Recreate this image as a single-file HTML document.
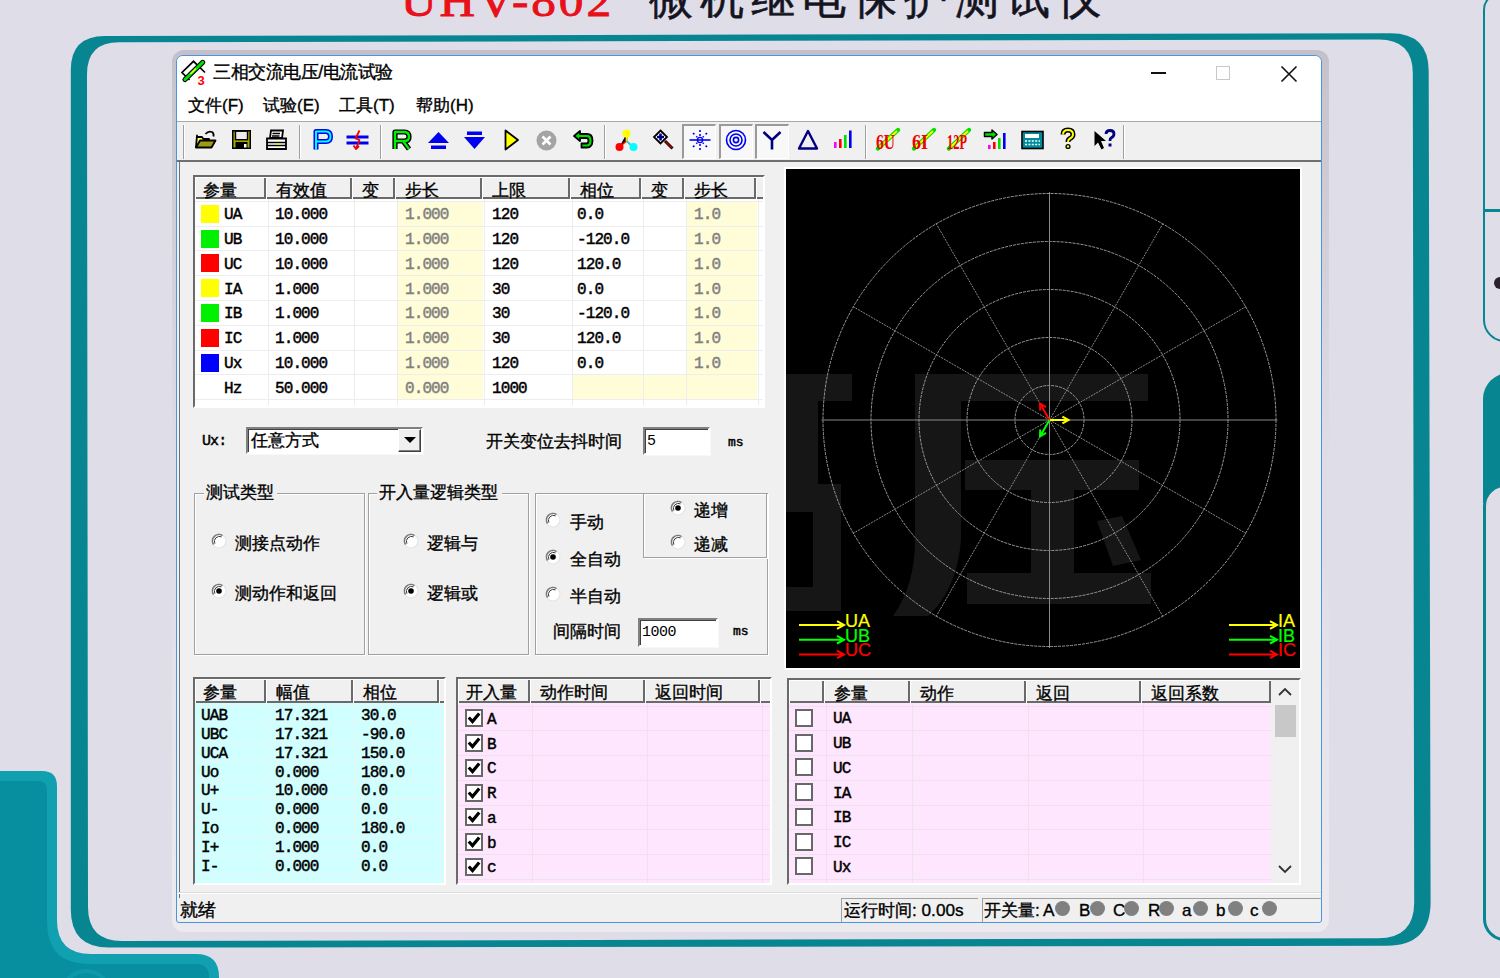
<!DOCTYPE html>
<html><head><meta charset="utf-8">
<style>
*{box-sizing:border-box;margin:0;padding:0}
html,body{width:1500px;height:978px;overflow:hidden}
body{position:relative;background:#dfdde8;font-family:"Liberation Sans",sans-serif;color:#000}
.a{position:absolute}
.t{position:absolute;white-space:nowrap;line-height:1}
.m{position:absolute;white-space:nowrap;line-height:1;font-family:"Liberation Mono",monospace;letter-spacing:-0.9px;-webkit-text-stroke:0.45px currentColor}
.t{-webkit-text-stroke:0.35px currentColor}
svg{position:absolute;overflow:visible}
</style></head><body>

<div class="t" style="left:401px;top:-20px;font-size:44px;color:#e8101a;font-family:'Liberation Serif',serif;letter-spacing:2.6px;-webkit-text-stroke:0.9px #e8101a;transform:scaleX(1.12);transform-origin:left">UHV-802</div>
<div class="t" style="left:649px;top:-24px;font-size:44px;color:#141420;letter-spacing:7px;-webkit-text-stroke:0.6px #141420">微机继电保护测试仪</div>
<svg style="left:0;top:0" width="1500" height="978"><path d="M104.8 36 L1390.7 33.3 Q1428.7 33.3 1428.7 71.3 L1430.6 901.8 Q1430.6 945.8 1386.6 945.8 L108.8 947.6 Q70.8 947.6 70.8 909.6 L70.8 70 Q70.8 36 104.8 36 Z M119 42.3 L1378.8 39.5 Q1412.8 39.5 1412.8 73.5 L1414.2 902.3 Q1414.2 938.3 1378.2 938.3 L122 941 Q88 941 88 907 L87 74.3 Q87 42.3 119 42.3 Z" fill="#078591" fill-rule="evenodd"/></svg>
<div class="a" style="left:1483px;top:-8px;width:40px;height:350px;border:2.6px solid #078591;border-radius:18px 0 0 22px"></div>
<div class="a" style="left:1483px;top:209px;width:40px;height:3px;background:#078591;"></div>
<div class="a" style="left:1483px;top:373px;width:40px;height:130px;background:#078591;border-radius:26px 0 0 0"></div>
<div class="a" style="left:1483px;top:484px;width:40px;height:457px;border:3px solid #078591;border-radius:22px 0 0 22px;background:#dfdde8"></div>
<div class="a" style="left:1494px;top:277px;width:12px;height:12px;border-radius:50%;background:#2a2030"></div>
<svg style="left:0;top:0" width="1500" height="978">
<path d="M-10 771 H42 Q57 771 57 786 V920 Q57 954 91 954 H196 Q219 954 219 977 V990 H-10 Z" fill="#10a0b0"/>
<path d="M-10 781 H38 Q47 781 47 790 V922 Q47 964 89 964 H196 Q209 964 209 977 V990 H-10 Z" fill="#078e9f"/>
<ellipse cx="86" cy="991" rx="24" ry="22" fill="#0c9aab"/>
<ellipse cx="86" cy="993" rx="21" ry="20" fill="#078e9f"/>
</svg>
<div class="a" style="left:172px;top:49.5px;width:1157px;height:420px;background:linear-gradient(#c3c0c9, #c8c5ce 40px, rgba(210,208,215,0) 420px);border-radius:12px 12px 0 0"></div>
<div class="a" style="left:172px;top:560px;width:1157px;height:372px;background:linear-gradient(rgba(236,235,240,0), #eceaef 340px);border-radius:0 0 12px 12px"></div>
<div class="a" style="left:176px;top:55px;width:1146px;height:868px;background:#f0f0f0;border:1px solid #4a94e0;border-radius:7px 7px 3px 3px"></div>
<div class="a" style="left:177px;top:56px;width:1144px;height:65px;background:#fff;border-radius:6px 6px 0 0"></div>
<div class="a" style="left:177px;top:121px;width:1144px;height:1px;background:#a9a9a9;"></div>
<div class="t" style="left:213px;top:64.3px;font-size:17.6px;color:#000;letter-spacing:-0.45px">三相交流电压/电流试验</div>
<svg style="left:180px;top:59px" width="28" height="28">
<path d="M9.5 21 L2 13.5 L13.5 2.3 L25 13.5" fill="none" stroke="#000" stroke-width="1.7"/>
<path d="M5 20.5 L22.7 3.4" stroke="#000" stroke-width="5.2" stroke-linecap="round"/>
<path d="M5 20.5 L22.7 3.4" stroke="#00e000" stroke-width="3" stroke-linecap="round"/>
<path d="M10.5 15 L16 9.5" stroke="#f0ff30" stroke-width="1.6"/>
<rect x="17.2" y="15" width="8" height="11" fill="#fff"/>
<text x="17.5" y="25.5" font-family="Liberation Sans" font-weight="bold" font-size="13" fill="#ff0000" transform="scale(1,1)">3</text>
</svg>
<div class="a" style="left:1151px;top:72px;width:15px;height:2px;background:#111;"></div>
<div class="a" style="left:1216px;top:66px;width:14px;height:14px;border:1px solid #c8c8c8"></div>
<svg style="left:1279px;top:64px" width="20" height="20"><path d="M2.5 2.5L17.5 17.5M17.5 2.5L2.5 17.5" stroke="#111" stroke-width="1.6"/></svg>
<div class="t" style="left:188px;top:97px;font-size:17px;color:#000;">文件(F)</div>
<div class="t" style="left:263px;top:97px;font-size:17px;color:#000;">试验(E)</div>
<div class="t" style="left:339px;top:97px;font-size:17px;color:#000;">工具(T)</div>
<div class="t" style="left:416px;top:97px;font-size:17px;color:#000;">帮助(H)</div>
<div class="a" style="left:183px;top:125px;width:2px;height:34px;border-left:1px solid #a0a0a0;border-right:1px solid #fff"></div>
<div class="a" style="left:177px;top:160px;width:1144px;height:2px;background:#707070;"></div>
<div class="a" style="left:179px;top:160px;width:1px;height:738px;background:#707070;"></div>
<div class="a" style="left:299px;top:125px;width:2px;height:34px;border-left:1px solid #a0a0a0;border-right:1px solid #fff"></div>
<div class="a" style="left:380px;top:125px;width:2px;height:34px;border-left:1px solid #a0a0a0;border-right:1px solid #fff"></div>
<div class="a" style="left:604px;top:125px;width:2px;height:34px;border-left:1px solid #a0a0a0;border-right:1px solid #fff"></div>
<div class="a" style="left:865px;top:125px;width:2px;height:34px;border-left:1px solid #a0a0a0;border-right:1px solid #fff"></div>
<div class="a" style="left:1123px;top:125px;width:2px;height:34px;border-left:1px solid #a0a0a0;border-right:1px solid #fff"></div>
<div class="a" style="left:682px;top:124px;width:34px;height:35px;background:#f8f8f8;border-left:2px solid #9a9a9a;border-top:2px solid #9a9a9a;border-right:1px solid #fff;border-bottom:1px solid #fff"></div>
<div class="a" style="left:719px;top:124px;width:34px;height:35px;background:#f8f8f8;border-left:2px solid #9a9a9a;border-top:2px solid #9a9a9a;border-right:1px solid #fff;border-bottom:1px solid #fff"></div>
<div class="a" style="left:755px;top:124px;width:34px;height:35px;background:#f8f8f8;border-left:2px solid #9a9a9a;border-top:2px solid #9a9a9a;border-right:1px solid #fff;border-bottom:1px solid #fff"></div>
<svg style="left:194px;top:129px" width="23" height="21" viewBox="0 0 23 21"><path d="M3 6.5 L2 18 L15 18 L15 10 L9.5 10 L8 8 L3 8Z" fill="#ffff70" stroke="#000" stroke-width="1.8" stroke-linejoin="round"/>
<path d="M2 18.5 L6 11.5 L21.5 11.5 L17.5 18.5Z" fill="#9c9c10" stroke="#000" stroke-width="1.8" stroke-linejoin="round"/>
<path d="M11.5 5 Q14.5 1.5 18 3 Q20 4 19.5 7.5" fill="none" stroke="#000" stroke-width="1.8"/></svg>
<svg style="left:231px;top:129px" width="21" height="21" viewBox="0 0 21 21"><rect x="1" y="1" width="19" height="19" fill="#000"/>
<rect x="2.5" y="2.5" width="16" height="16" fill="#a8a800"/>
<rect x="4.5" y="2.2" width="12" height="8.5" fill="#ececec" stroke="#000" stroke-width="1.4"/>
<rect x="4.5" y="13" width="12" height="7" fill="#000"/>
<rect x="13" y="15" width="2.5" height="3.5" fill="#fff"/></svg>
<svg style="left:265px;top:129px" width="23" height="22" viewBox="0 0 23 22"><path d="M6 1.5 H18 L17 9 H5Z" fill="#fff" stroke="#000" stroke-width="1.8"/>
<path d="M7.5 4.5H15M7 7H14.5" stroke="#000" stroke-width="1.3"/>
<path d="M2 9.5 H21 V20 H2Z" fill="#fff" stroke="#000" stroke-width="1.8"/>
<path d="M2 13.5H21M2 16.5H21" stroke="#000" stroke-width="1.4"/>
<rect x="11" y="14.2" width="4" height="1.8" fill="#e0e000"/></svg>
<svg style="left:312px;top:129px" width="21" height="22" viewBox="0 0 21 22"><path d="M4 20.5 V2.5 H14 Q18.5 2.5 18.5 7.5 Q18.5 12.5 14 12.5 H4" fill="none" stroke="#0000f0" stroke-width="5" stroke-linejoin="round"/>
<path d="M4 20.5 V2.5 H14 Q18.5 2.5 18.5 7.5 Q18.5 12.5 14 12.5 H4" fill="none" stroke="#00ffff" stroke-width="2" stroke-linejoin="round"/></svg>
<svg style="left:346px;top:129px" width="23" height="22" viewBox="0 0 23 22"><rect x="0.5" y="6.5" width="22" height="3" fill="#0000f0"/>
<rect x="0.5" y="12.5" width="22" height="3" fill="#0000f0"/>
<path d="M13.5 1.5 L9.5 9.5 L13.5 11 L10 19.5 M7.5 16.5 L10 20 L13 17" fill="none" stroke="#f00000" stroke-width="1.8" stroke-linejoin="round"/></svg>
<svg style="left:391px;top:129px" width="22" height="22" viewBox="0 0 22 22"><path d="M4 20 V3 H13.5 Q18 3 18 8 Q18 12 13.5 12 H4 M12 12 L18 20" fill="none" stroke="#000" stroke-width="5.2" stroke-linejoin="round"/>
<path d="M4 20 V3 H13.5 Q18 3 18 8 Q18 12 13.5 12 H4 M12 12 L18 20" fill="none" stroke="#00f000" stroke-width="2.4" stroke-linejoin="round"/></svg>
<svg style="left:427px;top:129px" width="23" height="22" viewBox="0 0 23 22"><path d="M1 14 L11.5 3 L22 14Z" fill="#0000f0"/><rect x="4" y="16.5" width="15" height="3.5" fill="#0000f0"/></svg>
<svg style="left:463px;top:129px" width="23" height="22" viewBox="0 0 23 22"><rect x="4" y="2.5" width="15" height="3.5" fill="#0000f0"/><path d="M1 8 L11.5 20 L22 8Z" fill="#0000f0"/></svg>
<svg style="left:504px;top:129px" width="16" height="22" viewBox="0 0 16 22"><path d="M1.5 1.5 L14 11 L1.5 20.5Z" fill="#ffff00" stroke="#000" stroke-width="1.8" stroke-linejoin="round"/></svg>
<svg style="left:536px;top:130px" width="21" height="21" viewBox="0 0 21 21"><circle cx="10.5" cy="10.5" r="10" fill="#a4a4a4"/><path d="M6.5 6.5L14.5 14.5M14.5 6.5L6.5 14.5" stroke="#fff" stroke-width="2.6"/></svg>
<svg style="left:572px;top:129px" width="23" height="22" viewBox="0 0 23 22"><path d="M2 7 L8 2 V5 H15 Q20.5 5 20.5 11.5 Q20.5 18.5 15 18.5 H9.5 V14.5 H14.5 Q16.5 14.5 16.5 11.5 Q16.5 9 14.5 9 H8 V12Z" fill="#00e000" stroke="#000" stroke-width="1.8" stroke-linejoin="round"/></svg>
<svg style="left:615px;top:129px" width="23" height="22" viewBox="0 0 23 22"><path d="M11.5 5 V12 L4 18.5 M11.5 12 L18.5 18.5" stroke="#f00" stroke-width="1.6"/><path d="M11.5 12 L18.5 18.5" stroke="#00e8e8" stroke-width="1.6"/><path d="M11.5 5 V12" stroke="#e8e800" stroke-width="1.6"/>
<circle cx="11.5" cy="4.5" r="4" fill="#ffff00"/><circle cx="4.5" cy="18" r="4" fill="#ff0000"/><circle cx="18.5" cy="18" r="4" fill="#00ffff"/></svg>
<svg style="left:651px;top:129px" width="24" height="22" viewBox="0 0 24 22"><path d="M14 12 L21.5 19.5" stroke="#000" stroke-width="3"/><path d="M14.5 12.5 L21 19" stroke="#c00000" stroke-width="1.4"/>
<path d="M9.5 1.5 L16 8 L9.5 14.5 L3 8Z" fill="#fff" stroke="#000" stroke-width="1.8"/>
<path d="M9.5 4.5V11.5M6 8H13" stroke="#000080" stroke-width="2.6"/></svg>
<svg style="left:689px;top:129px" width="22" height="22" viewBox="0 0 22 22"><path d="M0.5 11H21.5" stroke="#0000f0" stroke-width="1.6"/>
<circle cx="11" cy="11" r="2.6" fill="none" stroke="#0000f0" stroke-width="1.3"/>
<path d="M11 1V3M11 5V7M11 15V17M11 19V21" stroke="#0000f0" stroke-width="1.6"/>
<path d="M4 4L5.4 5.4M7.3 7.3L8.2 8.2M13.8 13.8L14.7 14.7M16.6 16.6L18 18M18 4L16.6 5.4M14.7 7.3L13.8 8.2M8.2 13.8L7.3 14.7M5.4 16.6L4 18" stroke="#0000f0" stroke-width="1.6"/></svg>
<svg style="left:725px;top:129px" width="22" height="22" viewBox="0 0 22 22"><circle cx="11" cy="11" r="9.5" fill="none" stroke="#0000f0" stroke-width="1.6"/><circle cx="11" cy="11" r="6" fill="none" stroke="#0000f0" stroke-width="1.6"/><circle cx="11" cy="11" r="2.6" fill="none" stroke="#0000f0" stroke-width="1.6"/></svg>
<svg style="left:761px;top:129px" width="22" height="22" viewBox="0 0 22 22"><path d="M2.5 3 L11 11 L19.5 3 M11 11 V20.5" fill="none" stroke="#000080" stroke-width="2.6"/></svg>
<svg style="left:797px;top:129px" width="22" height="22" viewBox="0 0 22 22"><path d="M11 2 L20 19.5 H2Z" fill="none" stroke="#000080" stroke-width="2.4" stroke-linejoin="round"/></svg>
<svg style="left:832px;top:129px" width="22" height="22" viewBox="0 0 22 22"><rect x="2" y="13" width="2.6" height="6" fill="#ff00ff"/><rect x="7" y="10" width="2.6" height="9" fill="#ff0000"/><rect x="12" y="6" width="2.6" height="13" fill="#00e000"/><rect x="17" y="1.5" width="2.6" height="17.5" fill="#0000f0"/></svg>
<svg style="left:876px;top:127px" width="26" height="24" viewBox="0 0 26 24"><path d="M2 21.5 L22 3" stroke="#00e000" stroke-width="4.4" stroke-linecap="round"/><path d="M3 20.5 L21 4" stroke="#ffff00" stroke-width="2"/><text transform="scale(0.78,1)" x="0" y="22.5" font-family="Liberation Serif" font-weight="bold" font-size="20" fill="#f00000">6U</text></svg>
<svg style="left:912px;top:127px" width="26" height="24" viewBox="0 0 26 24"><path d="M2 21.5 L22 3" stroke="#00e000" stroke-width="4.4" stroke-linecap="round"/><path d="M3 20.5 L21 4" stroke="#ffff00" stroke-width="2"/><text transform="scale(0.9,1)" x="0" y="22.5" font-family="Liberation Serif" font-weight="bold" font-size="20" fill="#f00000">6I</text></svg>
<svg style="left:947px;top:127px" width="26" height="24" viewBox="0 0 26 24"><path d="M2 21.5 L22 3" stroke="#00e000" stroke-width="4.4" stroke-linecap="round"/><path d="M3 20.5 L21 4" stroke="#ffff00" stroke-width="2"/><text transform="scale(0.62,1)" x="0" y="22.5" font-family="Liberation Serif" font-weight="bold" font-size="20" fill="#f00000">12P</text></svg>
<svg style="left:983px;top:129px" width="26" height="22" viewBox="0 0 26 22"><path d="M1.5 3.5 H9 V1 L14 5.5 L9 10 V7.5 H1.5Z" fill="#00e000" stroke="#000" stroke-width="1.5" stroke-linejoin="round"/>
<rect x="5" y="16" width="2.6" height="4" fill="#ff00ff"/><rect x="10" y="13" width="2.6" height="7" fill="#ff0000"/><rect x="15" y="9" width="2.6" height="11" fill="#00e000"/><rect x="20" y="4" width="2.6" height="16" fill="#0000f0"/></svg>
<svg style="left:1021px;top:130px" width="23" height="20" viewBox="0 0 23 20"><rect x="1" y="1.5" width="21" height="17" fill="#008c9c" stroke="#000" stroke-width="1.6"/>
<rect x="4" y="4" width="14" height="4" fill="#fff"/>
<path d="M4 11H19M4 14.5H19" stroke="#fff" stroke-width="1.4" stroke-dasharray="2 1.4"/></svg>
<svg style="left:1059px;top:128px" width="18" height="23" viewBox="0 0 18 23"><path d="M4 6.5 Q4 2 9 2 Q14 2 14 6.5 Q14 9 11 10.5 Q9 11.5 9 14" fill="none" stroke="#000" stroke-width="5"/>
<path d="M4 6.5 Q4 2 9 2 Q14 2 14 6.5 Q14 9 11 10.5 Q9 11.5 9 14" fill="none" stroke="#ffff00" stroke-width="2"/>
<circle cx="9" cy="18.5" r="2.6" fill="#000"/><circle cx="9" cy="18.5" r="1.2" fill="#ffff00"/></svg>
<svg style="left:1093px;top:128px" width="25" height="24" viewBox="0 0 25 24"><path d="M1.5 3 L1.5 18 L5 14.5 L8.5 21.5 L11 20 L8 13 L13 13Z" fill="#000"/>
<path d="M13 6 Q13 2.5 17 2.5 Q21 2.5 21 6 Q21 8.5 18 10 Q17 10.5 17 13" fill="none" stroke="#000080" stroke-width="2.8"/>
<rect x="15.5" y="15.5" width="3" height="3" fill="#000080"/></svg>
<div class="a" style="left:193px;top:175px;width:572px;height:233px;border-top:2px solid #6a6a6a;border-left:2px solid #6a6a6a;border-right:2px solid #fff;border-bottom:2px solid #fff"></div>
<div class="a" style="left:195px;top:177px;width:568px;height:229px;background:#fff;"></div>
<div class="a" style="left:195px;top:177px;width:71px;height:22px;background:#f0f0f0;border-left:1px solid #fff;border-top:1px solid #fff;box-shadow:inset -2px -2px 0 #6a6a6a"></div>
<div class="t" style="left:203px;top:182px;font-size:17px;color:#000;">参量</div>
<div class="a" style="left:266px;top:177px;width:86px;height:22px;background:#f0f0f0;border-left:1px solid #fff;border-top:1px solid #fff;box-shadow:inset -2px -2px 0 #6a6a6a"></div>
<div class="t" style="left:276px;top:182px;font-size:17px;color:#000;">有效值</div>
<div class="a" style="left:352px;top:177px;width:43px;height:22px;background:#f0f0f0;border-left:1px solid #fff;border-top:1px solid #fff;box-shadow:inset -2px -2px 0 #6a6a6a"></div>
<div class="t" style="left:362px;top:182px;font-size:17px;color:#000;">变</div>
<div class="a" style="left:395px;top:177px;width:87px;height:22px;background:#f0f0f0;border-left:1px solid #fff;border-top:1px solid #fff;box-shadow:inset -2px -2px 0 #6a6a6a"></div>
<div class="t" style="left:405px;top:182px;font-size:17px;color:#000;">步长</div>
<div class="a" style="left:482px;top:177px;width:88px;height:22px;background:#f0f0f0;border-left:1px solid #fff;border-top:1px solid #fff;box-shadow:inset -2px -2px 0 #6a6a6a"></div>
<div class="t" style="left:492px;top:182px;font-size:17px;color:#000;">上限</div>
<div class="a" style="left:570px;top:177px;width:71px;height:22px;background:#f0f0f0;border-left:1px solid #fff;border-top:1px solid #fff;box-shadow:inset -2px -2px 0 #6a6a6a"></div>
<div class="t" style="left:580px;top:182px;font-size:17px;color:#000;">相位</div>
<div class="a" style="left:641px;top:177px;width:43px;height:22px;background:#f0f0f0;border-left:1px solid #fff;border-top:1px solid #fff;box-shadow:inset -2px -2px 0 #6a6a6a"></div>
<div class="t" style="left:651px;top:182px;font-size:17px;color:#000;">变</div>
<div class="a" style="left:684px;top:177px;width:72px;height:22px;background:#f0f0f0;border-left:1px solid #fff;border-top:1px solid #fff;box-shadow:inset -2px -2px 0 #6a6a6a"></div>
<div class="t" style="left:694px;top:182px;font-size:17px;color:#000;">步长</div>
<div class="a" style="left:756px;top:177px;width:7px;height:22px;background:#f0f0f0;border-left:1px solid #fff;border-top:1px solid #fff;box-shadow:inset 0 -2px 0 #6a6a6a"></div>
<div class="a" style="left:397.5px;top:201.8px;width:85px;height:23.8px;background:#fffdd8;"></div>
<div class="a" style="left:686.5px;top:201.8px;width:70px;height:23.8px;background:#fffdd8;"></div>
<div class="a" style="left:397.5px;top:226.6px;width:85px;height:23.8px;background:#fffdd8;"></div>
<div class="a" style="left:686.5px;top:226.6px;width:70px;height:23.8px;background:#fffdd8;"></div>
<div class="a" style="left:397.5px;top:251.4px;width:85px;height:23.8px;background:#fffdd8;"></div>
<div class="a" style="left:686.5px;top:251.4px;width:70px;height:23.8px;background:#fffdd8;"></div>
<div class="a" style="left:397.5px;top:276.2px;width:85px;height:23.8px;background:#fffdd8;"></div>
<div class="a" style="left:686.5px;top:276.2px;width:70px;height:23.8px;background:#fffdd8;"></div>
<div class="a" style="left:397.5px;top:301.0px;width:85px;height:23.8px;background:#fffdd8;"></div>
<div class="a" style="left:686.5px;top:301.0px;width:70px;height:23.8px;background:#fffdd8;"></div>
<div class="a" style="left:397.5px;top:325.8px;width:85px;height:23.8px;background:#fffdd8;"></div>
<div class="a" style="left:686.5px;top:325.8px;width:70px;height:23.8px;background:#fffdd8;"></div>
<div class="a" style="left:397.5px;top:350.6px;width:85px;height:23.8px;background:#fffdd8;"></div>
<div class="a" style="left:686.5px;top:350.6px;width:70px;height:23.8px;background:#fffdd8;"></div>
<div class="a" style="left:397.5px;top:375.4px;width:85px;height:23.8px;background:#fffdd8;"></div>
<div class="a" style="left:572.5px;top:375.4px;width:184px;height:23.8px;background:#fffdd8;"></div>
<div class="a" style="left:195px;top:200.8px;width:568px;height:1px;background:#ededed;"></div>
<div class="a" style="left:195px;top:225.6px;width:568px;height:1px;background:#ededed;"></div>
<div class="a" style="left:195px;top:250.4px;width:568px;height:1px;background:#ededed;"></div>
<div class="a" style="left:195px;top:275.2px;width:568px;height:1px;background:#ededed;"></div>
<div class="a" style="left:195px;top:300.0px;width:568px;height:1px;background:#ededed;"></div>
<div class="a" style="left:195px;top:324.8px;width:568px;height:1px;background:#ededed;"></div>
<div class="a" style="left:195px;top:349.6px;width:568px;height:1px;background:#ededed;"></div>
<div class="a" style="left:195px;top:374.4px;width:568px;height:1px;background:#ededed;"></div>
<div class="a" style="left:195px;top:399.2px;width:568px;height:1px;background:#ededed;"></div>
<div class="a" style="left:267.5px;top:199px;width:1px;height:206px;background:#ededed;"></div>
<div class="a" style="left:353.5px;top:199px;width:1px;height:206px;background:#ededed;"></div>
<div class="a" style="left:396.5px;top:199px;width:1px;height:206px;background:#ededed;"></div>
<div class="a" style="left:483.5px;top:199px;width:1px;height:206px;background:#ededed;"></div>
<div class="a" style="left:571.5px;top:199px;width:1px;height:206px;background:#ededed;"></div>
<div class="a" style="left:642.5px;top:199px;width:1px;height:206px;background:#ededed;"></div>
<div class="a" style="left:685.5px;top:199px;width:1px;height:206px;background:#ededed;"></div>
<div class="a" style="left:757.5px;top:199px;width:1px;height:206px;background:#ededed;"></div>
<div class="a" style="left:201px;top:204.7px;width:18px;height:18px;background:#ffff00;"></div>
<div class="m" style="left:224px;top:207.2px;font-size:16px">UA</div>
<div class="m" style="left:275px;top:207.2px;font-size:16px">10.000</div>
<div class="m" style="left:405px;top:207.2px;font-size:16px;color:#808080">1.000</div>
<div class="m" style="left:492px;top:207.2px;font-size:16px">120</div>
<div class="m" style="left:577px;top:207.2px;font-size:16px">0.0</div>
<div class="m" style="left:694px;top:207.2px;font-size:16px;color:#808080">1.0</div>
<div class="a" style="left:201px;top:229.5px;width:18px;height:18px;background:#00f000;"></div>
<div class="m" style="left:224px;top:232.0px;font-size:16px">UB</div>
<div class="m" style="left:275px;top:232.0px;font-size:16px">10.000</div>
<div class="m" style="left:405px;top:232.0px;font-size:16px;color:#808080">1.000</div>
<div class="m" style="left:492px;top:232.0px;font-size:16px">120</div>
<div class="m" style="left:577px;top:232.0px;font-size:16px">-120.0</div>
<div class="m" style="left:694px;top:232.0px;font-size:16px;color:#808080">1.0</div>
<div class="a" style="left:201px;top:254.3px;width:18px;height:18px;background:#ff0000;"></div>
<div class="m" style="left:224px;top:256.8px;font-size:16px">UC</div>
<div class="m" style="left:275px;top:256.8px;font-size:16px">10.000</div>
<div class="m" style="left:405px;top:256.8px;font-size:16px;color:#808080">1.000</div>
<div class="m" style="left:492px;top:256.8px;font-size:16px">120</div>
<div class="m" style="left:577px;top:256.8px;font-size:16px">120.0</div>
<div class="m" style="left:694px;top:256.8px;font-size:16px;color:#808080">1.0</div>
<div class="a" style="left:201px;top:279.1px;width:18px;height:18px;background:#ffff00;"></div>
<div class="m" style="left:224px;top:281.6px;font-size:16px">IA</div>
<div class="m" style="left:275px;top:281.6px;font-size:16px">1.000</div>
<div class="m" style="left:405px;top:281.6px;font-size:16px;color:#808080">1.000</div>
<div class="m" style="left:492px;top:281.6px;font-size:16px">30</div>
<div class="m" style="left:577px;top:281.6px;font-size:16px">0.0</div>
<div class="m" style="left:694px;top:281.6px;font-size:16px;color:#808080">1.0</div>
<div class="a" style="left:201px;top:303.9px;width:18px;height:18px;background:#00f000;"></div>
<div class="m" style="left:224px;top:306.4px;font-size:16px">IB</div>
<div class="m" style="left:275px;top:306.4px;font-size:16px">1.000</div>
<div class="m" style="left:405px;top:306.4px;font-size:16px;color:#808080">1.000</div>
<div class="m" style="left:492px;top:306.4px;font-size:16px">30</div>
<div class="m" style="left:577px;top:306.4px;font-size:16px">-120.0</div>
<div class="m" style="left:694px;top:306.4px;font-size:16px;color:#808080">1.0</div>
<div class="a" style="left:201px;top:328.7px;width:18px;height:18px;background:#ff0000;"></div>
<div class="m" style="left:224px;top:331.2px;font-size:16px">IC</div>
<div class="m" style="left:275px;top:331.2px;font-size:16px">1.000</div>
<div class="m" style="left:405px;top:331.2px;font-size:16px;color:#808080">1.000</div>
<div class="m" style="left:492px;top:331.2px;font-size:16px">30</div>
<div class="m" style="left:577px;top:331.2px;font-size:16px">120.0</div>
<div class="m" style="left:694px;top:331.2px;font-size:16px;color:#808080">1.0</div>
<div class="a" style="left:201px;top:353.5px;width:18px;height:18px;background:#0000ff;"></div>
<div class="m" style="left:224px;top:356.0px;font-size:16px">Ux</div>
<div class="m" style="left:275px;top:356.0px;font-size:16px">10.000</div>
<div class="m" style="left:405px;top:356.0px;font-size:16px;color:#808080">1.000</div>
<div class="m" style="left:492px;top:356.0px;font-size:16px">120</div>
<div class="m" style="left:577px;top:356.0px;font-size:16px">0.0</div>
<div class="m" style="left:694px;top:356.0px;font-size:16px;color:#808080">1.0</div>
<div class="m" style="left:224px;top:380.8px;font-size:16px">Hz</div>
<div class="m" style="left:275px;top:380.8px;font-size:16px">50.000</div>
<div class="m" style="left:405px;top:380.8px;font-size:16px;color:#808080">0.000</div>
<div class="m" style="left:492px;top:380.8px;font-size:16px">1000</div>
<div class="m" style="left:202px;top:434px;font-size:15px">Ux:</div>
<div class="a" style="left:246px;top:427px;width:177px;height:27px;background:#fff;border:2px solid;border-color:#808080 #fff #fff #808080;box-shadow:inset 1px 1px 0 #404040, 1px 1px 0 #f8f8f8"></div>
<div class="t" style="left:251px;top:433px;font-size:16.8px;color:#000;">任意方式</div>
<div class="a" style="left:398px;top:429px;width:23px;height:23px;background:#f0f0f0;border:1px solid;border-color:#fff #404040 #404040 #fff;box-shadow:inset -1px -1px 0 #808080"></div>
<svg style="left:403px;top:436px" width="14" height="8"><path d="M1 1H13L7 7Z" fill="#000"/></svg>
<div class="t" style="left:486px;top:432.5px;font-size:17.2px;color:#000;">开关变位去抖时间</div>
<div class="a" style="left:643px;top:427px;width:67px;height:28px;background:#fff;border:2px solid;border-color:#808080 #fff #fff #808080;box-shadow:inset 1px 1px 0 #404040, 1px 1px 0 #f8f8f8"></div>
<div class="m" style="left:647px;top:434px;font-size:15px;letter-spacing:0;-webkit-text-stroke:0">5</div>
<div class="m" style="left:728px;top:436px;font-size:13px;letter-spacing:0;font-weight:normal">ms</div>
<div class="a" style="left:194px;top:493px;width:171px;height:162px;border:1px solid #a0a0a0;box-shadow:1px 1px 0 #fff, inset 1px 1px 0 #fff"></div>
<div class="a" style="left:204px;top:489px;width:73px;height:8px;background:#f0f0f0;"></div>
<div class="t" style="left:206px;top:484px;font-size:17.2px;color:#000;">测试类型</div>
<div class="a" style="left:368px;top:493px;width:161px;height:162px;border:1px solid #a0a0a0;box-shadow:1px 1px 0 #fff, inset 1px 1px 0 #fff"></div>
<div class="a" style="left:377px;top:489px;width:125px;height:8px;background:#f0f0f0;"></div>
<div class="t" style="left:379px;top:484px;font-size:17.2px;color:#000;">开入量逻辑类型</div>
<div class="a" style="left:535px;top:493px;width:233px;height:162px;border:1px solid #a0a0a0;box-shadow:1px 1px 0 #fff, inset 1px 1px 0 #fff"></div>
<div class="a" style="left:643px;top:493px;width:124px;height:65px;border:1px solid #a0a0a0;box-shadow:1px 1px 0 #fff, inset 1px 1px 0 #fff"></div>
<svg style="left:211px;top:533px" width="16" height="16"><circle cx="8" cy="8" r="7" fill="#fff" stroke="#e4e4e4" stroke-width="1.2"/><path d="M2.6 11.5 A6.4 6.4 0 0 1 11.5 2.6" fill="none" stroke="#7a7a7a" stroke-width="1.6"/><path d="M3.9 10.6 A5 5 0 0 1 10.6 3.9" fill="none" stroke="#3a3a3a" stroke-width="1"/></svg>
<div class="t" style="left:235px;top:534.5px;font-size:17px;color:#000;">测接点动作</div>
<svg style="left:211px;top:583px" width="16" height="16"><circle cx="8" cy="8" r="7" fill="#fff" stroke="#e4e4e4" stroke-width="1.2"/><path d="M2.6 11.5 A6.4 6.4 0 0 1 11.5 2.6" fill="none" stroke="#7a7a7a" stroke-width="1.6"/><path d="M3.9 10.6 A5 5 0 0 1 10.6 3.9" fill="none" stroke="#3a3a3a" stroke-width="1"/><circle cx="8" cy="8" r="2.8" fill="#000"/></svg>
<div class="t" style="left:235px;top:584.5px;font-size:17px;color:#000;">测动作和返回</div>
<svg style="left:403px;top:533px" width="16" height="16"><circle cx="8" cy="8" r="7" fill="#fff" stroke="#e4e4e4" stroke-width="1.2"/><path d="M2.6 11.5 A6.4 6.4 0 0 1 11.5 2.6" fill="none" stroke="#7a7a7a" stroke-width="1.6"/><path d="M3.9 10.6 A5 5 0 0 1 10.6 3.9" fill="none" stroke="#3a3a3a" stroke-width="1"/></svg>
<div class="t" style="left:427px;top:534.5px;font-size:17px;color:#000;">逻辑与</div>
<svg style="left:403px;top:583px" width="16" height="16"><circle cx="8" cy="8" r="7" fill="#fff" stroke="#e4e4e4" stroke-width="1.2"/><path d="M2.6 11.5 A6.4 6.4 0 0 1 11.5 2.6" fill="none" stroke="#7a7a7a" stroke-width="1.6"/><path d="M3.9 10.6 A5 5 0 0 1 10.6 3.9" fill="none" stroke="#3a3a3a" stroke-width="1"/><circle cx="8" cy="8" r="2.8" fill="#000"/></svg>
<div class="t" style="left:427px;top:584.5px;font-size:17px;color:#000;">逻辑或</div>
<svg style="left:545px;top:512px" width="16" height="16"><circle cx="8" cy="8" r="7" fill="#fff" stroke="#e4e4e4" stroke-width="1.2"/><path d="M2.6 11.5 A6.4 6.4 0 0 1 11.5 2.6" fill="none" stroke="#7a7a7a" stroke-width="1.6"/><path d="M3.9 10.6 A5 5 0 0 1 10.6 3.9" fill="none" stroke="#3a3a3a" stroke-width="1"/></svg>
<div class="t" style="left:570px;top:513.5px;font-size:17px;color:#000;">手动</div>
<svg style="left:545px;top:549px" width="16" height="16"><circle cx="8" cy="8" r="7" fill="#fff" stroke="#e4e4e4" stroke-width="1.2"/><path d="M2.6 11.5 A6.4 6.4 0 0 1 11.5 2.6" fill="none" stroke="#7a7a7a" stroke-width="1.6"/><path d="M3.9 10.6 A5 5 0 0 1 10.6 3.9" fill="none" stroke="#3a3a3a" stroke-width="1"/><circle cx="8" cy="8" r="2.8" fill="#000"/></svg>
<div class="t" style="left:570px;top:550.5px;font-size:17px;color:#000;">全自动</div>
<svg style="left:545px;top:586px" width="16" height="16"><circle cx="8" cy="8" r="7" fill="#fff" stroke="#e4e4e4" stroke-width="1.2"/><path d="M2.6 11.5 A6.4 6.4 0 0 1 11.5 2.6" fill="none" stroke="#7a7a7a" stroke-width="1.6"/><path d="M3.9 10.6 A5 5 0 0 1 10.6 3.9" fill="none" stroke="#3a3a3a" stroke-width="1"/></svg>
<div class="t" style="left:570px;top:587.5px;font-size:17px;color:#000;">半自动</div>
<svg style="left:670px;top:500px" width="16" height="16"><circle cx="8" cy="8" r="7" fill="#fff" stroke="#e4e4e4" stroke-width="1.2"/><path d="M2.6 11.5 A6.4 6.4 0 0 1 11.5 2.6" fill="none" stroke="#7a7a7a" stroke-width="1.6"/><path d="M3.9 10.6 A5 5 0 0 1 10.6 3.9" fill="none" stroke="#3a3a3a" stroke-width="1"/><circle cx="8" cy="8" r="2.8" fill="#000"/></svg>
<div class="t" style="left:694px;top:501.5px;font-size:17px;color:#000;">递增</div>
<svg style="left:670px;top:534px" width="16" height="16"><circle cx="8" cy="8" r="7" fill="#fff" stroke="#e4e4e4" stroke-width="1.2"/><path d="M2.6 11.5 A6.4 6.4 0 0 1 11.5 2.6" fill="none" stroke="#7a7a7a" stroke-width="1.6"/><path d="M3.9 10.6 A5 5 0 0 1 10.6 3.9" fill="none" stroke="#3a3a3a" stroke-width="1"/></svg>
<div class="t" style="left:694px;top:535.5px;font-size:17px;color:#000;">递减</div>
<div class="t" style="left:553px;top:622.5px;font-size:17px;color:#000;">间隔时间</div>
<div class="a" style="left:638px;top:618px;width:80px;height:29px;background:#fff;border:2px solid;border-color:#808080 #fff #fff #808080;box-shadow:inset 1px 1px 0 #404040, 1px 1px 0 #f8f8f8"></div>
<div class="m" style="left:642px;top:625px;font-size:15px;letter-spacing:-0.5px;-webkit-text-stroke:0">1000</div>
<div class="m" style="left:733px;top:625px;font-size:13px;letter-spacing:0;font-weight:normal">ms</div>
<div class="a" style="left:193px;top:677px;width:253px;height:208px;border-top:2px solid #6a6a6a;border-left:2px solid #6a6a6a;border-right:2px solid #fff;border-bottom:2px solid #fff"></div>
<div class="a" style="left:195px;top:679px;width:249px;height:204px;background:#d0ffff;"></div>
<div class="a" style="left:195px;top:679px;width:71px;height:24px;background:#f0f0f0;border-left:1px solid #fff;border-top:1px solid #fff;box-shadow:inset -2px -2px 0 #6a6a6a"></div>
<div class="t" style="left:203px;top:684px;font-size:17px;color:#000;">参量</div>
<div class="a" style="left:266px;top:679px;width:87px;height:24px;background:#f0f0f0;border-left:1px solid #fff;border-top:1px solid #fff;box-shadow:inset -2px -2px 0 #6a6a6a"></div>
<div class="t" style="left:276px;top:684px;font-size:17px;color:#000;">幅值</div>
<div class="a" style="left:353px;top:679px;width:86px;height:24px;background:#f0f0f0;border-left:1px solid #fff;border-top:1px solid #fff;box-shadow:inset -2px -2px 0 #6a6a6a"></div>
<div class="t" style="left:363px;top:684px;font-size:17px;color:#000;">相位</div>
<div class="a" style="left:439px;top:679px;width:5px;height:24px;background:#f0f0f0;border-left:1px solid #fff;border-top:1px solid #fff;box-shadow:inset 0 -2px 0 #6a6a6a"></div>
<div class="a" style="left:195px;top:704.5px;width:249px;height:1px;background:#e8f4f4;"></div>
<div class="a" style="left:195px;top:723.4px;width:249px;height:1px;background:#e8f4f4;"></div>
<div class="a" style="left:195px;top:742.2px;width:249px;height:1px;background:#e8f4f4;"></div>
<div class="a" style="left:195px;top:761.0px;width:249px;height:1px;background:#e8f4f4;"></div>
<div class="a" style="left:195px;top:779.9px;width:249px;height:1px;background:#e8f4f4;"></div>
<div class="a" style="left:195px;top:798.8px;width:249px;height:1px;background:#e8f4f4;"></div>
<div class="a" style="left:195px;top:817.6px;width:249px;height:1px;background:#e8f4f4;"></div>
<div class="a" style="left:195px;top:836.5px;width:249px;height:1px;background:#e8f4f4;"></div>
<div class="a" style="left:195px;top:855.3px;width:249px;height:1px;background:#e8f4f4;"></div>
<div class="a" style="left:195px;top:874.1px;width:249px;height:1px;background:#e8f4f4;"></div>
<div class="a" style="left:267.5px;top:703px;width:1px;height:180px;background:#e8f4f4;"></div>
<div class="a" style="left:354.5px;top:703px;width:1px;height:180px;background:#e8f4f4;"></div>
<div class="a" style="left:440.5px;top:703px;width:1px;height:180px;background:#e8f4f4;"></div>
<div class="m" style="left:201px;top:707.9px;font-size:16px">UAB</div>
<div class="m" style="left:275px;top:707.9px;font-size:16px">17.321</div>
<div class="m" style="left:361px;top:707.9px;font-size:16px">30.0</div>
<div class="m" style="left:201px;top:726.8px;font-size:16px">UBC</div>
<div class="m" style="left:275px;top:726.8px;font-size:16px">17.321</div>
<div class="m" style="left:361px;top:726.8px;font-size:16px">-90.0</div>
<div class="m" style="left:201px;top:745.6px;font-size:16px">UCA</div>
<div class="m" style="left:275px;top:745.6px;font-size:16px">17.321</div>
<div class="m" style="left:361px;top:745.6px;font-size:16px">150.0</div>
<div class="m" style="left:201px;top:764.5px;font-size:16px">Uo</div>
<div class="m" style="left:275px;top:764.5px;font-size:16px">0.000</div>
<div class="m" style="left:361px;top:764.5px;font-size:16px">180.0</div>
<div class="m" style="left:201px;top:783.3px;font-size:16px">U+</div>
<div class="m" style="left:275px;top:783.3px;font-size:16px">10.000</div>
<div class="m" style="left:361px;top:783.3px;font-size:16px">0.0</div>
<div class="m" style="left:201px;top:802.2px;font-size:16px">U-</div>
<div class="m" style="left:275px;top:802.2px;font-size:16px">0.000</div>
<div class="m" style="left:361px;top:802.2px;font-size:16px">0.0</div>
<div class="m" style="left:201px;top:821.0px;font-size:16px">Io</div>
<div class="m" style="left:275px;top:821.0px;font-size:16px">0.000</div>
<div class="m" style="left:361px;top:821.0px;font-size:16px">180.0</div>
<div class="m" style="left:201px;top:839.9px;font-size:16px">I+</div>
<div class="m" style="left:275px;top:839.9px;font-size:16px">1.000</div>
<div class="m" style="left:361px;top:839.9px;font-size:16px">0.0</div>
<div class="m" style="left:201px;top:858.7px;font-size:16px">I-</div>
<div class="m" style="left:275px;top:858.7px;font-size:16px">0.000</div>
<div class="m" style="left:361px;top:858.7px;font-size:16px">0.0</div>
<div class="a" style="left:456px;top:677px;width:316px;height:208px;border-top:2px solid #6a6a6a;border-left:2px solid #6a6a6a;border-right:2px solid #fff;border-bottom:2px solid #fff"></div>
<div class="a" style="left:458px;top:679px;width:312px;height:204px;background:#fee6fe;"></div>
<div class="a" style="left:458px;top:679px;width:72px;height:24px;background:#f0f0f0;border-left:1px solid #fff;border-top:1px solid #fff;box-shadow:inset -2px -2px 0 #6a6a6a"></div>
<div class="t" style="left:466px;top:684px;font-size:17px;color:#000;">开入量</div>
<div class="a" style="left:530px;top:679px;width:115px;height:24px;background:#f0f0f0;border-left:1px solid #fff;border-top:1px solid #fff;box-shadow:inset -2px -2px 0 #6a6a6a"></div>
<div class="t" style="left:540px;top:684px;font-size:17px;color:#000;">动作时间</div>
<div class="a" style="left:645px;top:679px;width:115px;height:24px;background:#f0f0f0;border-left:1px solid #fff;border-top:1px solid #fff;box-shadow:inset -2px -2px 0 #6a6a6a"></div>
<div class="t" style="left:655px;top:684px;font-size:17px;color:#000;">返回时间</div>
<div class="a" style="left:760px;top:679px;width:10px;height:24px;background:#f0f0f0;border-left:1px solid #fff;border-top:1px solid #fff;box-shadow:inset 0 -2px 0 #6a6a6a"></div>
<div class="a" style="left:458px;top:705.5px;width:312px;height:1px;background:#ebe2eb;"></div>
<div class="a" style="left:458px;top:730.2px;width:312px;height:1px;background:#ebe2eb;"></div>
<div class="a" style="left:458px;top:755.0px;width:312px;height:1px;background:#ebe2eb;"></div>
<div class="a" style="left:458px;top:779.8px;width:312px;height:1px;background:#ebe2eb;"></div>
<div class="a" style="left:458px;top:804.5px;width:312px;height:1px;background:#ebe2eb;"></div>
<div class="a" style="left:458px;top:829.2px;width:312px;height:1px;background:#ebe2eb;"></div>
<div class="a" style="left:458px;top:854.0px;width:312px;height:1px;background:#ebe2eb;"></div>
<div class="a" style="left:458px;top:878.8px;width:312px;height:1px;background:#ebe2eb;"></div>
<div class="a" style="left:531.5px;top:703px;width:1px;height:180px;background:#ebe2eb;"></div>
<div class="a" style="left:646.5px;top:703px;width:1px;height:180px;background:#ebe2eb;"></div>
<div class="a" style="left:761.5px;top:703px;width:1px;height:180px;background:#ebe2eb;"></div>
<div class="a" style="left:465px;top:709.4px;width:18px;height:18px;background:#fff;border:2.5px solid #686868"></div>
<svg style="left:465px;top:709.4px" width="18" height="18"><path d="M3.8 8.5L7.5 12.5L14.2 4.5" fill="none" stroke="#000" stroke-width="3.2"/></svg>
<div class="m" style="left:487px;top:711.9px;font-size:16px">A</div>
<div class="a" style="left:465px;top:734.1px;width:18px;height:18px;background:#fff;border:2.5px solid #686868"></div>
<svg style="left:465px;top:734.1px" width="18" height="18"><path d="M3.8 8.5L7.5 12.5L14.2 4.5" fill="none" stroke="#000" stroke-width="3.2"/></svg>
<div class="m" style="left:487px;top:736.6px;font-size:16px">B</div>
<div class="a" style="left:465px;top:758.9px;width:18px;height:18px;background:#fff;border:2.5px solid #686868"></div>
<svg style="left:465px;top:758.9px" width="18" height="18"><path d="M3.8 8.5L7.5 12.5L14.2 4.5" fill="none" stroke="#000" stroke-width="3.2"/></svg>
<div class="m" style="left:487px;top:761.4px;font-size:16px">C</div>
<div class="a" style="left:465px;top:783.6px;width:18px;height:18px;background:#fff;border:2.5px solid #686868"></div>
<svg style="left:465px;top:783.6px" width="18" height="18"><path d="M3.8 8.5L7.5 12.5L14.2 4.5" fill="none" stroke="#000" stroke-width="3.2"/></svg>
<div class="m" style="left:487px;top:786.1px;font-size:16px">R</div>
<div class="a" style="left:465px;top:808.4px;width:18px;height:18px;background:#fff;border:2.5px solid #686868"></div>
<svg style="left:465px;top:808.4px" width="18" height="18"><path d="M3.8 8.5L7.5 12.5L14.2 4.5" fill="none" stroke="#000" stroke-width="3.2"/></svg>
<div class="m" style="left:487px;top:810.9px;font-size:16px">a</div>
<div class="a" style="left:465px;top:833.1px;width:18px;height:18px;background:#fff;border:2.5px solid #686868"></div>
<svg style="left:465px;top:833.1px" width="18" height="18"><path d="M3.8 8.5L7.5 12.5L14.2 4.5" fill="none" stroke="#000" stroke-width="3.2"/></svg>
<div class="m" style="left:487px;top:835.6px;font-size:16px">b</div>
<div class="a" style="left:465px;top:857.9px;width:18px;height:18px;background:#fff;border:2.5px solid #686868"></div>
<svg style="left:465px;top:857.9px" width="18" height="18"><path d="M3.8 8.5L7.5 12.5L14.2 4.5" fill="none" stroke="#000" stroke-width="3.2"/></svg>
<div class="m" style="left:487px;top:860.4px;font-size:16px">c</div>
<div class="a" style="left:787px;top:678px;width:514px;height:207px;border-top:2px solid #6a6a6a;border-left:2px solid #6a6a6a;border-right:2px solid #fff;border-bottom:2px solid #fff"></div>
<div class="a" style="left:789px;top:680px;width:510px;height:203px;background:#fee6fe;"></div>
<div class="a" style="left:789px;top:680px;width:35px;height:23px;background:#f0f0f0;border-left:1px solid #fff;border-top:1px solid #fff;box-shadow:inset -2px -2px 0 #6a6a6a"></div>
<div class="a" style="left:824px;top:680px;width:86px;height:23px;background:#f0f0f0;border-left:1px solid #fff;border-top:1px solid #fff;box-shadow:inset -2px -2px 0 #6a6a6a"></div>
<div class="t" style="left:834px;top:685px;font-size:17px;color:#000;">参量</div>
<div class="a" style="left:910px;top:680px;width:116px;height:23px;background:#f0f0f0;border-left:1px solid #fff;border-top:1px solid #fff;box-shadow:inset -2px -2px 0 #6a6a6a"></div>
<div class="t" style="left:920px;top:685px;font-size:17px;color:#000;">动作</div>
<div class="a" style="left:1026px;top:680px;width:115px;height:23px;background:#f0f0f0;border-left:1px solid #fff;border-top:1px solid #fff;box-shadow:inset -2px -2px 0 #6a6a6a"></div>
<div class="t" style="left:1036px;top:685px;font-size:17px;color:#000;">返回</div>
<div class="a" style="left:1141px;top:680px;width:130px;height:23px;background:#f0f0f0;border-left:1px solid #fff;border-top:1px solid #fff;box-shadow:inset -2px -2px 0 #6a6a6a"></div>
<div class="t" style="left:1151px;top:685px;font-size:17px;color:#000;">返回系数</div>
<div class="a" style="left:789px;top:705.5px;width:482px;height:1px;background:#ebe2eb;"></div>
<div class="a" style="left:789px;top:730.2px;width:482px;height:1px;background:#ebe2eb;"></div>
<div class="a" style="left:789px;top:755.0px;width:482px;height:1px;background:#ebe2eb;"></div>
<div class="a" style="left:789px;top:779.8px;width:482px;height:1px;background:#ebe2eb;"></div>
<div class="a" style="left:789px;top:804.5px;width:482px;height:1px;background:#ebe2eb;"></div>
<div class="a" style="left:789px;top:829.2px;width:482px;height:1px;background:#ebe2eb;"></div>
<div class="a" style="left:789px;top:854.0px;width:482px;height:1px;background:#ebe2eb;"></div>
<div class="a" style="left:789px;top:878.8px;width:482px;height:1px;background:#ebe2eb;"></div>
<div class="a" style="left:825.5px;top:703px;width:1px;height:180px;background:#ebe2eb;"></div>
<div class="a" style="left:911.5px;top:703px;width:1px;height:180px;background:#ebe2eb;"></div>
<div class="a" style="left:1027.5px;top:703px;width:1px;height:180px;background:#ebe2eb;"></div>
<div class="a" style="left:1142.5px;top:703px;width:1px;height:180px;background:#ebe2eb;"></div>
<div class="a" style="left:795px;top:708.9px;width:18px;height:18px;background:#fff;border:2.5px solid #686868"></div>
<div class="m" style="left:833px;top:711.4px;font-size:16px">UA</div>
<div class="a" style="left:795px;top:733.6px;width:18px;height:18px;background:#fff;border:2.5px solid #686868"></div>
<div class="m" style="left:833px;top:736.1px;font-size:16px">UB</div>
<div class="a" style="left:795px;top:758.4px;width:18px;height:18px;background:#fff;border:2.5px solid #686868"></div>
<div class="m" style="left:833px;top:760.9px;font-size:16px">UC</div>
<div class="a" style="left:795px;top:783.1px;width:18px;height:18px;background:#fff;border:2.5px solid #686868"></div>
<div class="m" style="left:833px;top:785.6px;font-size:16px">IA</div>
<div class="a" style="left:795px;top:807.9px;width:18px;height:18px;background:#fff;border:2.5px solid #686868"></div>
<div class="m" style="left:833px;top:810.4px;font-size:16px">IB</div>
<div class="a" style="left:795px;top:832.6px;width:18px;height:18px;background:#fff;border:2.5px solid #686868"></div>
<div class="m" style="left:833px;top:835.1px;font-size:16px">IC</div>
<div class="a" style="left:795px;top:857.4px;width:18px;height:18px;background:#fff;border:2.5px solid #686868"></div>
<div class="m" style="left:833px;top:859.9px;font-size:16px">Ux</div>
<div class="a" style="left:1271px;top:680px;width:28px;height:203px;background:#f0f0f0;"></div>
<div class="a" style="left:1275px;top:705px;width:21px;height:32px;background:#c8c8c8;"></div>
<svg style="left:1277px;top:687px" width="16" height="10"><path d="M2 8L8 2L14 8" fill="none" stroke="#333" stroke-width="1.8"/></svg>
<svg style="left:1277px;top:864px" width="16" height="10"><path d="M2 2L8 8L14 2" fill="none" stroke="#333" stroke-width="1.8"/></svg>
<div class="a" style="left:177px;top:892px;width:1144px;height:1px;background:#dcdcdc;"></div>
<div class="a" style="left:177px;top:893px;width:1144px;height:1px;background:#fff;"></div>
<div class="t" style="left:180px;top:902px;font-size:17.5px;color:#000;">就绪</div>
<div class="a" style="left:841px;top:898px;width:137px;height:24px;border-left:1px solid #a0a0a0;border-top:1px solid #a0a0a0"></div>
<div class="a" style="left:982px;top:898px;width:340px;height:24px;border-left:1px solid #a0a0a0;border-top:1px solid #a0a0a0"></div>
<div class="t" style="left:844px;top:902px;font-size:17.2px;color:#000;">运行时间: 0.00s</div>
<div class="t" style="left:984px;top:902px;font-size:17.2px;color:#000;">开关量:</div>
<div class="t" style="left:1043px;top:902px;font-size:17.2px;color:#000;">A</div>
<div class="t" style="left:1079px;top:902px;font-size:17px;color:#000;">B</div>
<div class="t" style="left:1113px;top:902px;font-size:17px;color:#000;">C</div>
<div class="t" style="left:1148px;top:902px;font-size:17px;color:#000;">R</div>
<div class="t" style="left:1182px;top:902px;font-size:17px;color:#000;">a</div>
<div class="t" style="left:1216px;top:902px;font-size:17px;color:#000;">b</div>
<div class="t" style="left:1250px;top:902px;font-size:17px;color:#000;">c</div>
<div class="a" style="left:1055.0px;top:901px;width:15px;height:15px;border-radius:50%;background:#808080"></div>
<div class="a" style="left:1089.5px;top:901px;width:15px;height:15px;border-radius:50%;background:#808080"></div>
<div class="a" style="left:1123.5px;top:901px;width:15px;height:15px;border-radius:50%;background:#808080"></div>
<div class="a" style="left:1158.5px;top:901px;width:15px;height:15px;border-radius:50%;background:#808080"></div>
<div class="a" style="left:1192.5px;top:901px;width:15px;height:15px;border-radius:50%;background:#808080"></div>
<div class="a" style="left:1227.5px;top:901px;width:15px;height:15px;border-radius:50%;background:#808080"></div>
<div class="a" style="left:1262.0px;top:901px;width:15px;height:15px;border-radius:50%;background:#808080"></div>
<div class="a" style="left:784px;top:167px;width:518px;height:503px;background:#fff;"></div>
<div class="a" style="left:786px;top:169px;width:514px;height:499px;background:#000;overflow:hidden">
<div class="a" style="left:0px;top:205px;width:66px;height:27px;background:#161616"></div>
<div class="a" style="left:0px;top:232px;width:32px;height:85px;background:#161616"></div>
<div class="a" style="left:0px;top:315px;width:55px;height:28px;background:#161616"></div>
<div class="a" style="left:27px;top:343px;width:28px;height:99px;background:#161616"></div>
<div class="a" style="left:0px;top:418px;width:55px;height:24px;background:#161616"></div>
<div class="a" style="left:129px;top:205px;width:233px;height:27px;background:#161616"></div>
<svg style="left:0;top:0" width="514" height="499"><path d="M129 232 H175 V371 Q171 421 142 447 H107 Q129 416 129 371 Z" fill="#161616"/><path d="M311 352 L336 347 L355 391 L327 397 Z" fill="#161616"/></svg>
<div class="a" style="left:179px;top:291px;width:174px;height:30px;background:#161616"></div>
<div class="a" style="left:245px;top:321px;width:43px;height:83px;background:#161616"></div>
<div class="a" style="left:181px;top:404px;width:184px;height:31px;background:#161616"></div>
</div>
<svg style="left:786px;top:169px" width="514" height="499"><circle cx="263.5" cy="251" r="34.5" fill="none" stroke="#9a9a9a" stroke-width="1" stroke-dasharray="3 1"/><circle cx="263.5" cy="251" r="82.5" fill="none" stroke="#9a9a9a" stroke-width="1" stroke-dasharray="3 1"/><circle cx="263.5" cy="251" r="130.5" fill="none" stroke="#9a9a9a" stroke-width="1" stroke-dasharray="3 1"/><circle cx="263.5" cy="251" r="178.5" fill="none" stroke="#9a9a9a" stroke-width="1" stroke-dasharray="3 1"/><circle cx="263.5" cy="251" r="226.5" fill="none" stroke="#9a9a9a" stroke-width="1" stroke-dasharray="3 1"/><line x1="263.5" y1="251" x2="491.5" y2="251.0" stroke="#8a8a8a" stroke-width="1"/><line x1="263.5" y1="251" x2="461.0" y2="137.0" stroke="#8a8a8a" stroke-width="1" stroke-dasharray="2 1"/><line x1="263.5" y1="251" x2="377.5" y2="53.5" stroke="#8a8a8a" stroke-width="1" stroke-dasharray="2 1"/><line x1="263.5" y1="251" x2="263.5" y2="23.0" stroke="#8a8a8a" stroke-width="1"/><line x1="263.5" y1="251" x2="149.5" y2="53.5" stroke="#8a8a8a" stroke-width="1" stroke-dasharray="2 1"/><line x1="263.5" y1="251" x2="66.0" y2="137.0" stroke="#8a8a8a" stroke-width="1" stroke-dasharray="2 1"/><line x1="263.5" y1="251" x2="35.5" y2="251.0" stroke="#8a8a8a" stroke-width="1"/><line x1="263.5" y1="251" x2="66.0" y2="365.0" stroke="#8a8a8a" stroke-width="1" stroke-dasharray="2 1"/><line x1="263.5" y1="251" x2="149.5" y2="448.5" stroke="#8a8a8a" stroke-width="1" stroke-dasharray="2 1"/><line x1="263.5" y1="251" x2="263.5" y2="479.0" stroke="#8a8a8a" stroke-width="1"/><line x1="263.5" y1="251" x2="377.5" y2="448.5" stroke="#8a8a8a" stroke-width="1" stroke-dasharray="2 1"/><line x1="263.5" y1="251" x2="461.0" y2="365.0" stroke="#8a8a8a" stroke-width="1" stroke-dasharray="2 1"/><path d="M263.5 251.0L282.5 251.0M276.4 254.4L282.5 251.0L276.4 247.6" fill="none" stroke="#ffff00" stroke-width="2"/><path d="M263.5 251.0L254.0 234.5M260.0 238.2L254.0 234.5L254.2 241.5" fill="none" stroke="#ff0000" stroke-width="2"/><path d="M263.5 251.0L254.0 267.5M254.2 260.5L254.0 267.5L260.0 263.8" fill="none" stroke="#00ff00" stroke-width="2"/><path d="M13.0 456.0L58.0 456.0M51.0 459.8L58.0 456.0L51.0 452.2" fill="none" stroke="#ffff00" stroke-width="2"/><path d="M443.0 456.0L491.0 456.0M484.0 459.8L491.0 456.0L484.0 452.2" fill="none" stroke="#ffff00" stroke-width="2"/><path d="M13.0 470.7L58.0 470.7M51.0 474.5L58.0 470.7L51.0 466.9" fill="none" stroke="#00ff00" stroke-width="2"/><path d="M443.0 470.7L491.0 470.7M484.0 474.5L491.0 470.7L484.0 466.9" fill="none" stroke="#00ff00" stroke-width="2"/><path d="M13.0 485.4L58.0 485.4M51.0 489.2L58.0 485.4L51.0 481.6" fill="none" stroke="#ff0000" stroke-width="2"/><path d="M443.0 485.4L491.0 485.4M484.0 489.2L491.0 485.4L484.0 481.6" fill="none" stroke="#ff0000" stroke-width="2"/></svg>
<div class="t" style="left:845px;top:612.0px;font-size:18px;color:#ffff00;-webkit-text-stroke:0.2px currentColor">UA</div>
<div class="t" style="left:1278px;top:612.0px;font-size:18px;color:#ffff00;-webkit-text-stroke:0.2px currentColor">IA</div>
<div class="t" style="left:845px;top:626.7px;font-size:18px;color:#00ff00;-webkit-text-stroke:0.2px currentColor">UB</div>
<div class="t" style="left:1278px;top:626.7px;font-size:18px;color:#00ff00;-webkit-text-stroke:0.2px currentColor">IB</div>
<div class="t" style="left:845px;top:641.4px;font-size:18px;color:#ff0000;-webkit-text-stroke:0.2px currentColor">UC</div>
<div class="t" style="left:1278px;top:641.4px;font-size:18px;color:#ff0000;-webkit-text-stroke:0.2px currentColor">IC</div>
</body></html>
